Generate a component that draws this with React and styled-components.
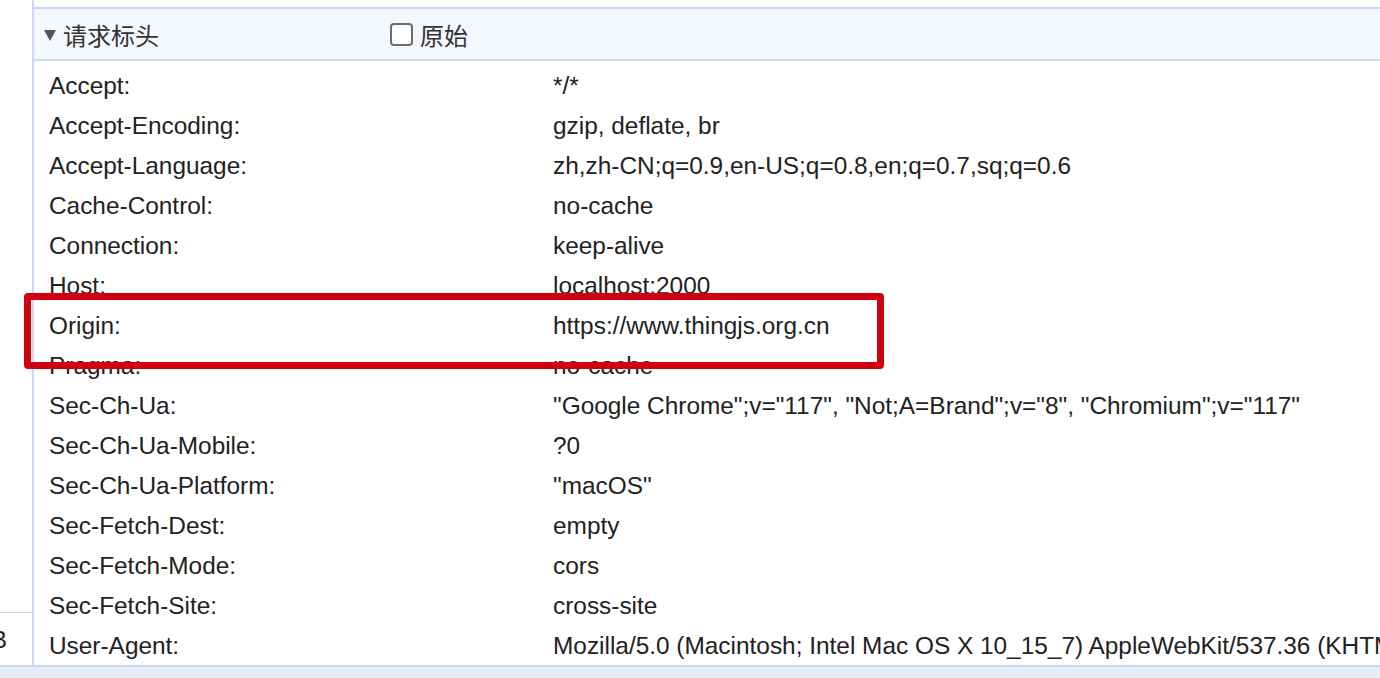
import React from "react";
import styled, { createGlobalStyle } from "styled-components";

const Global = createGlobalStyle`
  html, body { margin: 0; padding: 0; background: #fff; }
  body { font-family: "Liberation Sans", Arial, "Noto Sans CJK SC", sans-serif; }
  #root { width: 1380px; height: 678px; overflow: hidden; }
`;

const Page = styled.div`
  display: flex;
  flex-direction: column;
  width: 1380px;
  height: 678px;
  overflow: hidden;
  position: relative;
`;

const Top = styled.div`
  flex: 1;
  display: flex;
  min-height: 0;
`;

const LeftPane = styled.div`
  width: 32px;
  flex: none;
  display: flex;
  flex-direction: column;
  justify-content: flex-end;
  overflow: hidden;
`;

const SizeCell = styled.div`
  height: 53px;
  border-top: 1px solid #cad9f6;
  display: flex;
  align-items: center;
  font-size: 24px;
  color: #222;
  padding-top: 2px;
  box-sizing: border-box;
  white-space: nowrap;
  span { margin-left: -9px; }
`;

const Main = styled.div`
  flex: 1;
  display: flex;
  flex-direction: column;
  border-left: 2px solid #cad9f6;
  min-width: 0;
  padding-top: 7px;
`;

const Header = styled.div`
  height: 50px;
  flex: none;
  display: flex;
  align-items: center;
  background: #f3f7fe;
  border-top: 2px solid #cad9f6;
  border-bottom: 2px solid #cad9f6;
  color: #333;
  font-size: 24px;
  font-family: "Liberation Sans", "Noto Sans CJK SC", sans-serif;
`;

const Title = styled.div`
  width: 346px;
  display: flex;
  align-items: center;
  padding-left: 10px;
`;

const Arrow = styled.span`
  display: inline-block;
  width: 0;
  height: 0;
  border-left: 6px solid transparent;
  border-right: 6px solid transparent;
  border-top: 11px solid #555;
  margin-right: 7px;
  margin-top: 2px;
`;

const RawToggle = styled.label`
  display: flex;
  align-items: center;
  gap: 7px;
`;

const Box = styled.span`
  width: 19px;
  height: 19px;
  border: 2px solid #6d6d6d;
  border-radius: 4px;
  background: #fff;
`;

const Body = styled.div`
  flex: 1;
  padding-top: 5px;
  overflow: hidden;
`;

const Row = styled.div`
  display: grid;
  grid-template-columns: 504px 1fr;
  height: 40px;
  line-height: 40px;
  padding-left: 15px;
  font-size: 24.4px;
  color: #222;
  white-space: nowrap;
`;

const Key = styled.div``;
const Val = styled.div`
  overflow: hidden;
`;

const Footer = styled.div`
  height: 11px;
  flex: none;
  background: #e7ebf4;
  border-top: 2px solid #cad9f6;
`;

const Highlight = styled.div`
  position: absolute;
  left: 24px;
  top: 293px;
  width: 860px;
  height: 76px;
  box-sizing: border-box;
  border: 7px solid #d0000f;
  border-radius: 4px;
  pointer-events: none;
`;

const headers = [
  ["Accept:", "*/*"],
  ["Accept-Encoding:", "gzip, deflate, br"],
  ["Accept-Language:", "zh,zh-CN;q=0.9,en-US;q=0.8,en;q=0.7,sq;q=0.6"],
  ["Cache-Control:", "no-cache"],
  ["Connection:", "keep-alive"],
  ["Host:", "localhost:2000"],
  ["Origin:", "https://www.thingjs.org.cn"],
  ["Pragma:", "no-cache"],
  ["Sec-Ch-Ua:", "\"Google Chrome\";v=\"117\", \"Not;A=Brand\";v=\"8\", \"Chromium\";v=\"117\""],
  ["Sec-Ch-Ua-Mobile:", "?0"],
  ["Sec-Ch-Ua-Platform:", "\"macOS\""],
  ["Sec-Fetch-Dest:", "empty"],
  ["Sec-Fetch-Mode:", "cors"],
  ["Sec-Fetch-Site:", "cross-site"],
  ["User-Agent:", "Mozilla/5.0 (Macintosh; Intel Mac OS X 10_15_7) AppleWebKit/537.36 (KHTML, like Gecko) Chrome/117.0.0.0 Safari/537.36"],
];

export default function App() {
  return (
    <Page>
      <Global />
      <Top>
        <LeftPane>
          <SizeCell><span>B</span></SizeCell>
        </LeftPane>
        <Main>
          <Header>
            <Title><Arrow />请求标头</Title>
            <RawToggle><Box />原始</RawToggle>
          </Header>
          <Body>
            {headers.map(([k, v]) => (
              <Row key={k}>
                <Key>{k}</Key>
                <Val>{v}</Val>
              </Row>
            ))}
          </Body>
        </Main>
      </Top>
      <Footer />
      <Highlight />
    </Page>
  );
}
